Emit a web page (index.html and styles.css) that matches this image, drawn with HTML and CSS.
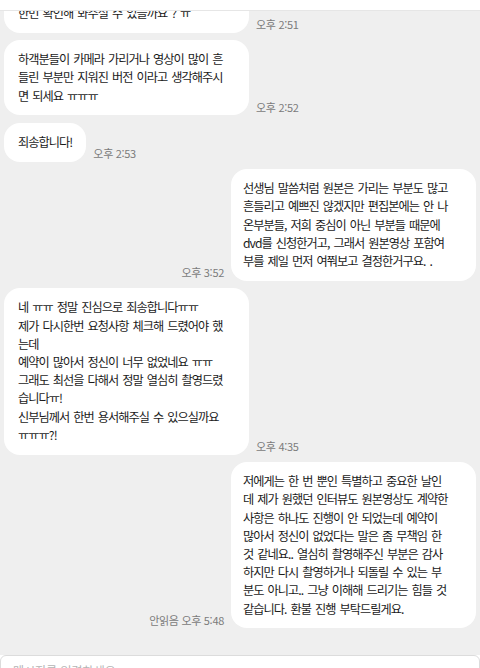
FILE: index.html
```html
<!DOCTYPE html>
<html lang="ko">
<head>
    <meta charset="UTF-8">
    <meta name="viewport" content="width=device-width, initial-scale=1.0">
    <title>채팅</title>
    <link rel="stylesheet" href="styles.css">
</head>
<body>
    <div class="app">
        <header class="topbar"></header>

        <!-- 대화 내용 (아래쪽 기준으로 쌓임) -->
        <main class="chat">
            <div class="msg in">
                <div class="bubble full">한번 확인해 봐주실 수 있을까요 ? ㅠ</div>
                <span class="time">오후 2:51</span>
            </div>

            <div class="msg in">
                <div class="bubble full">하객분들이 카메라 가리거나 영상이 많이 흔<br>들린 부분만 지워진 버전 이라고 생각해주시<br>면 되세요 ㅠㅠㅠ</div>
                <span class="time">오후 2:52</span>
            </div>

            <div class="msg in">
                <div class="bubble">죄송합니다!</div>
                <span class="time">오후 2:53</span>
            </div>

            <div class="msg out">
                <span class="time">오후 3:52</span>
                <div class="bubble full">선생님 말씀처럼 원본은 가리는 부분도 많고<br>흔들리고 예쁘진 않겠지만 편집본에는 안 나<br>온부분들, 저희 중심이 아닌 부분들 때문에<br>dvd를 신청한거고, 그래서 원본영상 포함여<br>부를 제일 먼저 여쭤보고 결정한거구요. .</div>
            </div>

            <div class="msg in">
                <div class="bubble full">네 ㅠㅠ 정말 진심으로 죄송합니다ㅠㅠ<br>제가 다시한번 요청사항 체크해 드렸어야 했<br>는데<br>예약이 많아서 정신이 너무 없었네요 ㅠㅠ<br>그래도 최선을 다해서 정말 열심히 촬영드렸<br>습니다ㅠ!<br>신부님께서 한번 용서해주실 수 있으실까요<br>ㅠㅠㅠ?!</div>
                <span class="time">오후 4:35</span>
            </div>

            <div class="msg out">
                <span class="time">안읽음 오후 5:48</span>
                <div class="bubble full">저에게는 한 번 뿐인 특별하고 중요한 날인<br>데 제가 원했던 인터뷰도 원본영상도 계약한<br>사항은 하나도 진행이 안 되었는데 예약이<br>많아서 정신이 없었다는 말은 좀 무책임 한<br>것 같네요.. 열심히 촬영해주신 부분은 감사<br>하지만 다시 촬영하거나 되돌릴 수 있는 부<br>분도 아니고.. 그냥 이해해 드리기는 힘들 것<br>같습니다. 환불 진행 부탁드릴게요.</div>
            </div>
        </main>

        <!-- 입력창 -->
        <footer class="composer">
            <div class="input">메시지를 입력하세요</div>
        </footer>
    </div>
</body>
</html>
```

FILE: styles.css
```css
* {
    box-sizing: border-box;
}

body {
    margin: 0;
    font-family: "Noto Sans CJK KR", "Noto Sans", sans-serif;
    color: #1a1a1a;
    background-color: #fff;
}

.app {
    width: 480px;
    height: 668px;
    display: flex;
    flex-direction: column;
    overflow: hidden;
}

.topbar {
    flex: none;
    height: 11px;
    background-color: #fff;
    border-bottom: 1px solid #e6e6e6;
}

.chat {
    flex: 1;
    min-height: 0;
    overflow: hidden;
    display: flex;
    flex-direction: column;
    justify-content: flex-end;
    gap: 7.5px;
    padding: 0 4px 26.7px;
    background-color: #efefef;
}

.msg {
    flex: none;
    display: flex;
    align-items: flex-end;
    gap: 7px;
}

.msg.out {
    justify-content: flex-end;
}

.bubble {
    background-color: #fff;
    border-radius: 16px;
    padding: 10px 14px 10.6px;
    font-size: 12.2px;
    line-height: 18.2px;
    letter-spacing: -0.95px;
    word-spacing: 1.5px;
    white-space: nowrap;
}

.bubble.full {
    width: 245px;
}

.msg.out .bubble {
    padding-left: 12px;
}

.time {
    flex: none;
    margin-bottom: 0.5px;
    font-size: 11px;
    line-height: 15px;
    letter-spacing: -0.3px;
    color: #7b7b7b;
}

.composer {
    flex: none;
    height: 13px;
    background-color: #fff;
}

.input {
    height: 30px;
    padding: 7px 12px;
    border: 1px solid #dcdcdc;
    border-radius: 6px 6px 0 0;
    font-size: 12px;
    line-height: 16px;
    color: #b4b4b4;
}
```
